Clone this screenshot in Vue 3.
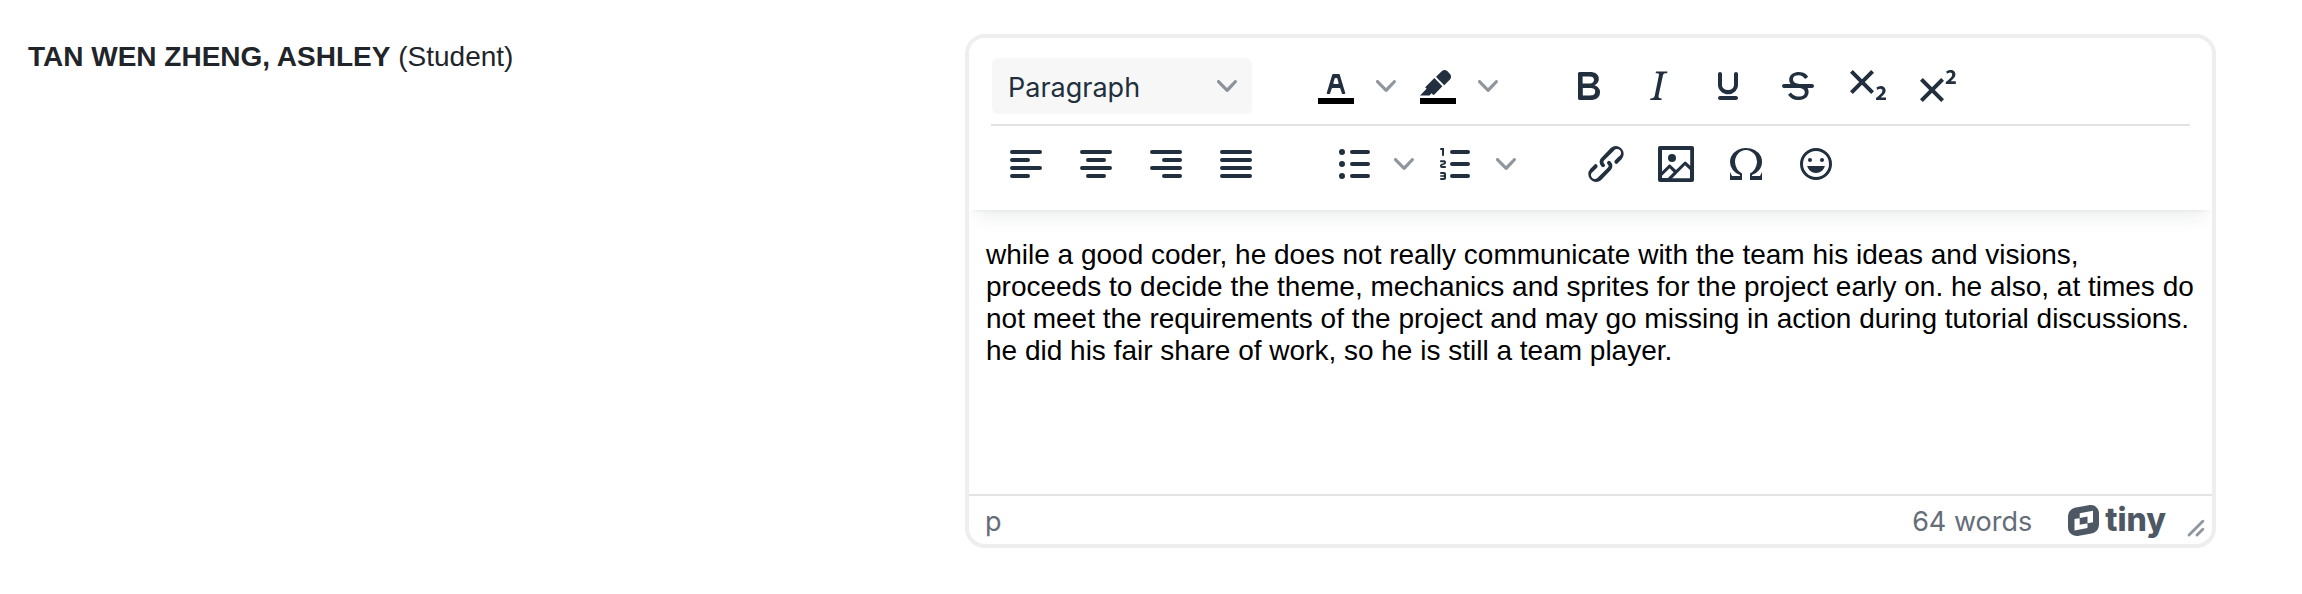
<script setup>
import { ref } from 'vue'

const format = ref('Paragraph')
const comment = ref(
  'while a good coder, he does not really communicate with the team his ideas and visions, proceeds to decide the theme, mechanics and sprites for the project early on. he also, at times do not meet the requirements of the project and may go missing in action during tutorial discussions. he did his fair share of work, so he is still a team player.'
)

const bar = (x, y, w) => `M${x + 1} ${y}h${w - 2}a1 1 0 0 1 0 2h${2 - w}a1 1 0 0 1 0-2Z`
const dot = (y) => `M6 ${y - 1.5}a1.5 1.5 0 1 1 0 3 1.5 1.5 0 0 1 0-3Z`

const rows = [
  [
    [
      {
        label: 'Text color',
        split: true,
        swatch: true,
        d: 'M8.7 16h-.8a.5.5 0 0 1-.5-.6l2.7-9c.1-.3.3-.4.5-.4h2.8c.2 0 .4.1.5.4l2.7 9a.5.5 0 0 1-.5.6h-.8a.5.5 0 0 1-.4-.4l-.7-2.2c0-.3-.3-.4-.5-.4h-3.4c-.2 0-.4.1-.5.4l-.7 2.2c0 .3-.2.4-.4.4Zm2.6-7.6-.6 2a.5.5 0 0 0 .5.6h1.6a.5.5 0 0 0 .5-.6l-.6-2c0-.3-.3-.4-.5-.4h-.4c-.2 0-.4.1-.5.4Z'
      },
      {
        label: 'Background color',
        split: true,
        swatch: true,
        d: 'M7.7 16.7H3l3.3-3.3-.7-.8L10.2 8l4 4.1-4 4.2c-.2.2-.6.2-.8 0l-.6-.7-1.1 1.1Zm5-7.5L11 7.4l3-2.9a2 2 0 0 1 2.6 0L18 6c.7.7.7 2 0 2.7l-2.9 2.9-1.8-1.8-.5-.6Z'
      }
    ],
    [
      {
        label: 'Bold',
        d: 'M7.8 19c-.3 0-.5 0-.6-.2l-.2-.5V5.7c0-.2 0-.4.2-.5l.6-.2h5c1.5 0 2.7.3 3.5 1 .7.6 1.1 1.4 1.1 2.5a3 3 0 0 1-.6 1.9c-.4.6-1 1-1.6 1.2.4.1.9.3 1.3.6s.8.7 1 1.2c.4.4.5 1 .5 1.6 0 1.3-.4 2.3-1.3 3-.8.7-2.1 1-3.8 1H7.8Zm5-8.3c.6 0 1.2-.1 1.6-.5.4-.3.6-.7.6-1.3 0-1.1-.8-1.7-2.3-1.7H9.3v3.5h3.4Zm.5 6c.7 0 1.3-.1 1.7-.4.4-.4.6-.9.6-1.5s-.2-1-.7-1.4c-.4-.3-1-.4-2-.4H9.4v3.8h4Z'
      },
      {
        label: 'Italic',
        d: 'm16.7 4.7-.1.9h-.3c-.6 0-1 0-1.4.3-.3.3-.4.6-.5 1.1l-2.1 9.8v.6c0 .5.4.8 1.4.8h.2l-.2.8H8l.2-.8h.2c1.1 0 1.8-.5 2-1.5l2-9.8.1-.5c0-.6-.4-.8-1.4-.8h-.3l.2-.9h5.8Z'
      },
      {
        label: 'Underline',
        d: 'M16 5c.6 0 1 .4 1 1v5.5a4 4 0 0 1-.4 1.8l-1 1.4a5.3 5.3 0 0 1-5.5 1 5 5 0 0 1-1.6-1c-.5-.4-.8-.9-1.1-1.4a4 4 0 0 1-.4-1.8V6c0-.6.4-1 1-1s1 .4 1 1v5.5c0 .3 0 .6.2 1l.6.7a3.3 3.3 0 0 0 2.2.8 3.4 3.4 0 0 0 2.2-.8c.3-.2.4-.5.6-.8l.2-.9V6c0-.6.4-1 1-1ZM8 17h8c.6 0 1 .4 1 1s-.4 1-1 1H8a1 1 0 0 1 0-2Z'
      },
      {
        label: 'Strikethrough',
        rule: 'nonzero',
        d: 'M15.6 8.5c-.5-.7-1-1.1-1.3-1.3-.6-.4-1.3-.6-2-.6-2.7 0-2.8 1.7-2.8 2.1 0 1.6 1.8 2 3.2 2.3 4.4.9 4.6 2.8 4.6 3.9 0 1.4-.7 4.1-5 4.1A6.2 6.2 0 0 1 7 16.4l1.5-1.1c.4.6 1.6 2 3.7 2 1.6 0 2.5-.4 3-1.2.4-.8.3-2-.8-2.6-.7-.4-1.6-.7-2.9-1-1-.2-3.9-.8-3.9-3.6C7.6 6 10.3 5 12.4 5c2.9 0 4.2 1.6 4.7 2.4l-1.5 1.1ZM5 11h14a1 1 0 0 1 0 2H5a1 1 0 0 1 0-2Z'
      },
      {
        label: 'Subscript',
        d: 'm10.4 10 4.6 4.6-1.4 1.4L9 11.4 4.4 16 3 14.6 7.6 10 3 5.4 4.4 4 9 8.6 13.6 4 15 5.4 10.4 10ZM21 19h-5v-1l1-.8 1.7-1.6c.3-.4.5-.8.5-1.2 0-.3 0-.6-.2-.7-.2-.2-.5-.3-.9-.3a2 2 0 0 0-.8.2l-.7.3-.4-1.1 1-.6 1.2-.2c.8 0 1.4.3 1.8.7.4.4.6.9.6 1.5s-.2 1.1-.5 1.6a8 8 0 0 1-1.3 1.3l-.6.6h2.6V19Z'
      },
      {
        label: 'Superscript',
        d: 'M15 9.4 10.4 14l4.6 4.6-1.4 1.4L9 15.4 4.4 20 3 18.6 7.6 14 3 9.4 4.4 8 9 12.6 13.6 8 15 9.4Zm5.9 1.6h-5v-1l1-.8 1.7-1.6c.3-.5.5-.9.5-1.3 0-.3 0-.5-.2-.7-.2-.2-.5-.3-.9-.3l-.8.2-.7.4-.4-1.2c.2-.2.5-.4 1-.5.3-.2.8-.2 1.2-.2.8 0 1.4.2 1.8.6.4.4.6 1 .6 1.6 0 .5-.2 1-.5 1.5l-1.3 1.4-.6.5h2.6V11Z'
      }
    ]
  ],
  [
    [
      { label: 'Align left', d: bar(4, 5, 16) + bar(4, 9, 10) + bar(4, 13, 16) + bar(4, 17, 10) },
      { label: 'Align center', d: bar(4, 5, 16) + bar(7, 9, 10) + bar(4, 13, 16) + bar(7, 17, 10) },
      { label: 'Align right', d: bar(4, 5, 16) + bar(10, 9, 10) + bar(4, 13, 16) + bar(10, 17, 10) },
      { label: 'Justify', d: bar(4, 5, 16) + bar(4, 9, 16) + bar(4, 13, 16) + bar(4, 17, 16) }
    ],
    [
      {
        label: 'Bullet list',
        split: true,
        d: bar(10, 5, 10) + bar(10, 11, 10) + bar(10, 17, 10) + dot(6) + dot(12) + dot(18)
      },
      {
        label: 'Numbered list',
        split: true,
        d:
          bar(9, 5, 10) + bar(9, 11, 10) + bar(9, 17, 10) +
          'M6 4v3.5c0 .3-.2.5-.5.5a.5.5 0 0 1-.5-.5V5h-.5a.5.5 0 0 1 0-1H6Zm-1 8.8.2.2h1.3c.3 0 .5.2.5.5s-.2.5-.5.5H4.9a1 1 0 0 1-.9-1V13c0-.4.3-.8.6-1l1.2-.4.2-.3a.2.2 0 0 0-.2-.2H4.5a.5.5 0 0 1-.5-.5c0-.3.2-.5.5-.5h1.6c.5 0 .9.4.9 1v.1c0 .4-.3.8-.6 1l-1.2.4-.2.3ZM7 17v2c0 .6-.4 1-1 1H4.5a.5.5 0 0 1 0-1h1.2c.2 0 .3-.1.3-.3 0-.2-.1-.3-.3-.3H4.4a.4.4 0 1 1 0-.8h1.3c.2 0 .3-.1.3-.3 0-.2-.1-.3-.3-.3H4.5a.5.5 0 1 1 0-1H6c.6 0 1 .4 1 1Z'
      }
    ],
    [
      {
        label: 'Insert link',
        d: 'M6.2 12.3a1 1 0 0 1 1.4 1.4l-2 2a2 2 0 1 0 2.6 2.8l4.8-4.8a1 1 0 0 0 0-1.4 1 1 0 1 1 1.4-1.3 2.9 2.9 0 0 1 0 4L9.6 20a3.9 3.9 0 0 1-5.5-5.5l2-2Zm11.6-.6a1 1 0 0 1-1.4-1.4l2-2a2 2 0 1 0-2.6-2.8L11 10.3a1 1 0 0 0 0 1.4A1 1 0 1 1 9.6 13a2.9 2.9 0 0 1 0-4L14.4 4a3.9 3.9 0 0 1 5.5 5.5l-2 2Z'
      },
      {
        label: 'Insert image',
        d: 'm5 15.7 3.3-3.2c.3-.3.7-.3 1 0L12 15l4.1-4c.3-.4.8-.4 1 0l2 1.9V5H5v10.7ZM5 18V19h3l2.8-2.9-2-2L5 17.9Zm14-3-2.5-2.4-6.4 6.5H19v-4ZM4 3h16c.6 0 1 .4 1 1v16c0 .6-.4 1-1 1H4a1 1 0 0 1-1-1V4c0-.6.4-1 1-1Zm6 8a2 2 0 1 0 0-4 2 2 0 0 0 0 4Z'
      },
      {
        label: 'Special character',
        d: 'M15 18h4l1-2v4h-6v-3.3l1.4-1a6 6 0 0 0 1.8-2.9 6.3 6.3 0 0 0-.1-4.1 5.8 5.8 0 0 0-3-3.2c-.6-.3-1.3-.5-2.1-.5a5.1 5.1 0 0 0-3.9 1.8 6.3 6.3 0 0 0-1.3 6 6.2 6.2 0 0 0 1.8 3l1.4.9V20H4v-4l1 2h4v-.5l-2-1L5.4 15A6.5 6.5 0 0 1 4 11c0-1 .2-1.9.6-2.7A7 7 0 0 1 7.8 5 8.2 8.2 0 0 1 12 4c1.5 0 3 .4 4.3 1a7.2 7.2 0 0 1 3.2 3.3A6.6 6.6 0 0 1 20 11c0 1.5-.5 2.8-1.4 4l-1.6 1.5-2 1v.5Z'
      },
      {
        label: 'Emojis',
        d: 'M9 11c.6 0 1-.4 1-1s-.4-1-1-1a1 1 0 0 0-1 1c0 .6.4 1 1 1Zm6 0c.6 0 1-.4 1-1s-.4-1-1-1a1 1 0 0 0-1 1c0 .6.4 1 1 1Zm-3 5.5c2.1 0 4-1.5 4.4-3.5H7.6c.5 2 2.3 3.5 4.4 3.5ZM12 4a8 8 0 1 0 0 16 8 8 0 0 0 0-16Zm0 14.5a6.5 6.5 0 1 1 0-13 6.5 6.5 0 0 1 0 13Z'
      }
    ]
  ]
]

const chevron =
  'M8.7 2.2c.3-.3.8-.3 1 0 .4.4.4.9 0 1.2L5.7 7.8c-.3.3-.9.3-1.2 0L.2 3.4a.8.8 0 0 1 0-1.2c.3-.3.8-.3 1.1 0L5 6l3.7-3.8Z'
</script>

<template>
  <main class="page">
    <p class="member"><strong>TAN WEN ZHENG, ASHLEY</strong> (Student)</p>

    <section class="editor" aria-label="Rich text editor">
      <header class="header">
        <div v-for="(groups, r) in rows" :key="r" class="toolbar" role="toolbar">
          <div v-if="r === 0" class="format">
            <select v-model="format" aria-label="Block format">
              <option>Paragraph</option>
            </select>
            <svg class="chevron" viewBox="0 0 10 10" aria-hidden="true"><path :d="chevron" /></svg>
          </div>
          <div v-for="(group, g) in groups" :key="g" class="group">
            <div v-for="tool in group" :key="tool.label" class="tool">
              <button type="button" class="main" :aria-label="tool.label">
                <svg class="icon" viewBox="0 0 24 24" aria-hidden="true">
                  <path v-if="tool.swatch" class="swatch" d="M3 18h18v3H3z" />
                  <path :d="tool.d" :fill-rule="tool.rule || 'evenodd'" />
                </svg>
              </button>
              <button v-if="tool.split" type="button" class="more" :aria-label="tool.label + ' menu'">
                <svg class="chevron" viewBox="0 0 10 10" aria-hidden="true"><path :d="chevron" /></svg>
              </button>
            </div>
          </div>
        </div>
      </header>

      <textarea v-model="comment" class="content" aria-label="Comment" spellcheck="false"></textarea>

      <footer class="status">
        <span class="path">p</span>
        <button type="button" class="words">64 words</button>
        <a class="brand" href="#" aria-label="tiny">
          <svg class="mark" viewBox="0 0 31 31" aria-hidden="true">
            <path
              fill-rule="evenodd"
              d="M8 2.6 20.5.3C26.5-.8 31 3 31 8.5V19c0 5-2.5 8.4-7.5 9.4L11 30.7C5 31.8 0 28 0 22.5V12C0 7 3 3.5 8 2.6ZM11.7 8.2 25 5.7v11.5l-13.300 2.500ZM6.500 14l13-2.400v11.500l-13 2.400Z"
            />
          </svg>
          <span>tiny</span>
        </a>
        <svg class="grip" viewBox="0 0 10 10" aria-hidden="true">
          <path d="M8.1 1.1A.5.5 0 1 1 9 2L2 9A.5.5 0 1 1 1 8l7-7ZM8.1 5.1A.5.5 0 1 1 9 6L6 9A.5.5 0 1 1 5 8l3-3Z" />
        </svg>
      </footer>
    </section>
  </main>
</template>

<style>
body {
  margin: 0;
  background: #fff;
}
</style>

<style scoped>
.page {
  display: grid;
  grid-template-columns: 937fr 1251fr;
  align-items: start;
  padding: 34px 86px 46px 28px;
  font-family: "Liberation Sans", Helvetica, Arial, sans-serif;
  font-size: 28px;
}
.member {
  margin: 0;
  padding-top: 2px;
  line-height: 42px;
  color: #212529;
}
.editor {
  display: flex;
  flex-direction: column;
  border: 4px solid #eee;
  border-radius: 20px;
  background: #fff;
  overflow: hidden;
  color: #222f3e;
}
.header {
  position: relative;
  padding: 10px 22px 8px;
  background: #fff;
  box-shadow: 0 4px 4px -4px rgba(34, 47, 62, 0.1), 0 16px 16px -8px rgba(34, 47, 62, 0.07);
}
.toolbar {
  display: flex;
  flex-wrap: wrap;
  gap: 48px;
  padding: 10px 1px;
}
.toolbar + .toolbar {
  border-top: 2px solid #e3e3e3;
}
.format {
  position: relative;
  width: 260px;
  margin-right: 2px;
}
.format select {
  width: 100%;
  height: 56px;
  padding: 2px 48px 0 16px;
  border: 0;
  border-radius: 6px;
  background: #f7f7f7;
  color: inherit;
  font: 27px Inter, sans-serif;
  appearance: none;
}
.format .chevron {
  position: absolute;
  top: 18px;
  right: 15px;
  pointer-events: none;
}
.group {
  display: flex;
}
.tool {
  display: flex;
  margin-right: 2px;
}
button {
  display: flex;
  align-items: center;
  justify-content: center;
  padding: 0;
  border: 0;
  background: none;
  color: inherit;
}
.main {
  width: 68px;
  height: 56px;
}
.more {
  width: 32px;
  height: 56px;
}
.icon {
  width: 48px;
  height: 48px;
  fill: #222f3e;
}
.swatch {
  fill: #000;
}
.chevron {
  width: 20px;
  height: 20px;
  fill: #222f3e;
  opacity: 0.5;
}
.content {
  display: block;
  box-sizing: border-box;
  width: 100%;
  height: 284px;
  padding: 29px 14px 28px 17px;
  border: 0;
  outline: 0;
  resize: none;
  overflow: hidden;
  background: none;
  color: #000;
  font: inherit;
  line-height: 32px;
}
.status {
  display: flex;
  align-items: center;
  height: 48px;
  padding: 0 6px 0 16px;
  border-top: 2px solid #e3e3e3;
  color: #646d78;
  font-family: Inter, sans-serif;
  font-size: 27px;
}
.path,
.words {
  padding-top: 2px;
}
.words {
  margin-left: auto;
  font: inherit;
}
.brand {
  display: flex;
  align-items: center;
  gap: 6px;
  margin-left: 36px;
  color: #4e5865;
  font-size: 32px;
  font-weight: 800;
  line-height: 32px;
  text-decoration: none;
}
.mark {
  width: 31px;
  height: 31px;
  fill: currentColor;
}
.grip {
  align-self: flex-end;
  width: 20px;
  height: 20px;
  margin: 0 0 6px 20px;
  fill: #8f96a0;
}
</style>
